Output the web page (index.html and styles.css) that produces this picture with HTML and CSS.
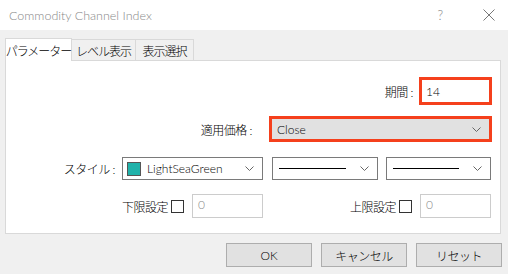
FILE: index.html
```html
<!DOCTYPE html>
<html lang="ja">
  <head>
    <meta charset="UTF-8" />
    <title>Commodity Channel Index</title>
    <link rel="stylesheet" href="styles.css">
  </head>
  <body>
    <div class="window">
      <div class="titlebar">
        <span class="title">Commodity Channel Index</span>
        <span class="help">?</span>
        <svg class="close" width="12" height="12" viewBox="0 0 12 12">
          <path d="M0.5 0.5 L11.5 11.5 M11.5 0.5 L0.5 11.5" stroke="#777" stroke-width="1" fill="none" />
        </svg>
      </div>

      <div class="content">
        <div class="tabs">
          <div class="tab active">パラメーター</div>
          <div class="tab">レベル表示</div>
          <div class="tab">表示選択</div>
        </div>

        <div class="panel">
          <div class="row row-period">
            <span class="label">期間 :</span>
            <div class="field highlight period-input">14</div>
          </div>

          <div class="row row-price">
            <span class="label">適用価格 :</span>
            <div class="field highlight combo price-select">
              <span>Close</span>
              <svg class="chevron" width="9" height="5" viewBox="0 0 9 5">
                <path d="M0.5 0.5 L4.5 4.5 L8.5 0.5" stroke="#666" fill="none" />
              </svg>
            </div>
          </div>

          <div class="row row-style">
            <span class="label">スタイル :</span>
            <div class="field select color-select">
              <span class="swatch"></span>
              <span class="color-name">LightSeaGreen</span>
              <svg class="chevron" width="9" height="5" viewBox="0 0 9 5">
                <path d="M0.5 0.5 L4.5 4.5 L8.5 0.5" stroke="#666" fill="none" />
              </svg>
            </div>
            <div class="field select line-select">
              <span class="line"></span>
              <svg class="chevron" width="9" height="5" viewBox="0 0 9 5">
                <path d="M0.5 0.5 L4.5 4.5 L8.5 0.5" stroke="#666" fill="none" />
              </svg>
            </div>
            <div class="field select line-select last">
              <span class="line"></span>
              <svg class="chevron" width="9" height="5" viewBox="0 0 9 5">
                <path d="M0.5 0.5 L4.5 4.5 L8.5 0.5" stroke="#666" fill="none" />
              </svg>
            </div>
          </div>

          <div class="row row-limits">
            <div class="limit">
              <span class="label">下限設定</span>
              <span class="checkbox"></span>
              <div class="field disabled">0</div>
            </div>
            <div class="limit">
              <span class="label">上限設定</span>
              <span class="checkbox"></span>
              <div class="field disabled">0</div>
            </div>
          </div>
        </div>

        <div class="buttons">
          <div class="button">OK</div>
          <div class="button ja">キャンセル</div>
          <div class="button ja">リセット</div>
        </div>
      </div>
    </div>
  </body>
</html>
```

FILE: styles.css
```css
* {
  margin: 0;
  padding: 0;
  box-sizing: border-box;
}

body {
  font-family: Lato, "Noto Sans CJK JP", sans-serif;
  font-size: 12px;
  font-weight: 300;
  color: #000;
  background-color: #f0f0f0;
  width: 508px;
  height: 274px;
  overflow: hidden;
}

.window {
  width: 508px;
  height: 274px;
  display: flex;
  flex-direction: column;
}

.titlebar {
  height: 30px;
  background-color: #fff;
  display: flex;
  align-items: center;
  padding-left: 9px;
}

.title {
  font-size: 12.5px;
  color: #888;
  flex: 1;
}

.help {
  color: #888;
  font-size: 13px;
  margin-right: 40px;
}

.close {
  margin-right: 13px;
}

.content {
  flex: 1;
  padding: 8px 6px 0 5px;
}

.tabs {
  display: flex;
  height: 22px;
  align-items: flex-end;
}

.tab {
  height: 21px;
  border: 1px solid #d9d9d9;
  border-bottom: none;
  background-color: #f0f0f0;
  display: flex;
  align-items: center;
  justify-content: center;
  margin-left: -1px;
  white-space: nowrap;
  letter-spacing: -1px;
}

.tab:first-child {
  margin-left: 0;
}

.tab.active {
  width: 67px;
  background-color: #fff;
  position: relative;
  z-index: 1;
  margin-bottom: -1px;
  height: 23px;
}

.tabs .tab:nth-child(2) {
  width: 65px;
}

.tabs .tab:nth-child(3) {
  width: 59px;
}

.panel {
  width: 496px;
  height: 174px;
  background-color: #fff;
  border: 1px solid #d9d9d9;
  padding: 16px 8px 0 0;
  display: flex;
  flex-direction: column;
}

.row {
  display: flex;
  align-items: center;
  justify-content: flex-end;
}

.label {
  white-space: nowrap;
  letter-spacing: -0.5px;
}

.field {
  height: 23px;
  border: 1px solid #7a7a7a;
  background-color: #fff;
  display: flex;
  align-items: center;
  padding-left: 6px;
}

.highlight {
  border: 3px solid #f5401c;
}

.period-input {
  width: 73px;
  height: 28px;
  margin-left: 6px;
  padding-left: 4px;
}

.row-price {
  margin-top: 11px;
}

.price-select {
  width: 223px;
  height: 26px;
  background-color: #e1e1e1;
  margin-left: 17px;
  padding-left: 5px;
}

.combo span,
.color-name {
  flex: 1;
}

.chevron {
  margin-right: 8px;
}

.row-style {
  margin-top: 15px;
  padding-right: 1px;
}

.select {
  height: 23px;
}

.color-select {
  width: 141px;
  margin-left: 7px;
  padding-left: 4px;
}

.swatch {
  width: 14px;
  height: 14px;
  background-color: #20b2aa;
  border: 1px solid #555;
  margin-right: 6px;
}

.line-select {
  width: 106px;
  margin-left: 9px;
  padding-left: 6px;
}

.line-select.last {
  width: 105px;
  margin-left: 8px;
}

.line {
  flex: 1;
  height: 1px;
  background-color: #000;
  margin-right: 14px;
}

.row-limits {
  margin-top: 14px;
  justify-content: space-between;
  padding-left: 116px;
  padding-right: 1px;
}

.limit {
  display: flex;
  align-items: center;
}

.checkbox {
  width: 13px;
  height: 13px;
  border: 1px solid #333;
  background-color: #fff;
  margin-left: 3px;
  margin-right: 8px;
}

.field.disabled {
  width: 71px;
  height: 24px;
  border-color: #ccc;
  color: #888;
  align-items: flex-start;
  padding-top: 2px;
  padding-left: 5px;
}

.buttons {
  display: flex;
  justify-content: flex-end;
  gap: 9px;
  margin-top: 9px;
}

.button {
  width: 86px;
  height: 24px;
  background-color: #e1e1e1;
  border: 1px solid #adadad;
  display: flex;
  align-items: center;
  justify-content: center;
}

.button.ja {
  letter-spacing: -0.5px;
}
```
